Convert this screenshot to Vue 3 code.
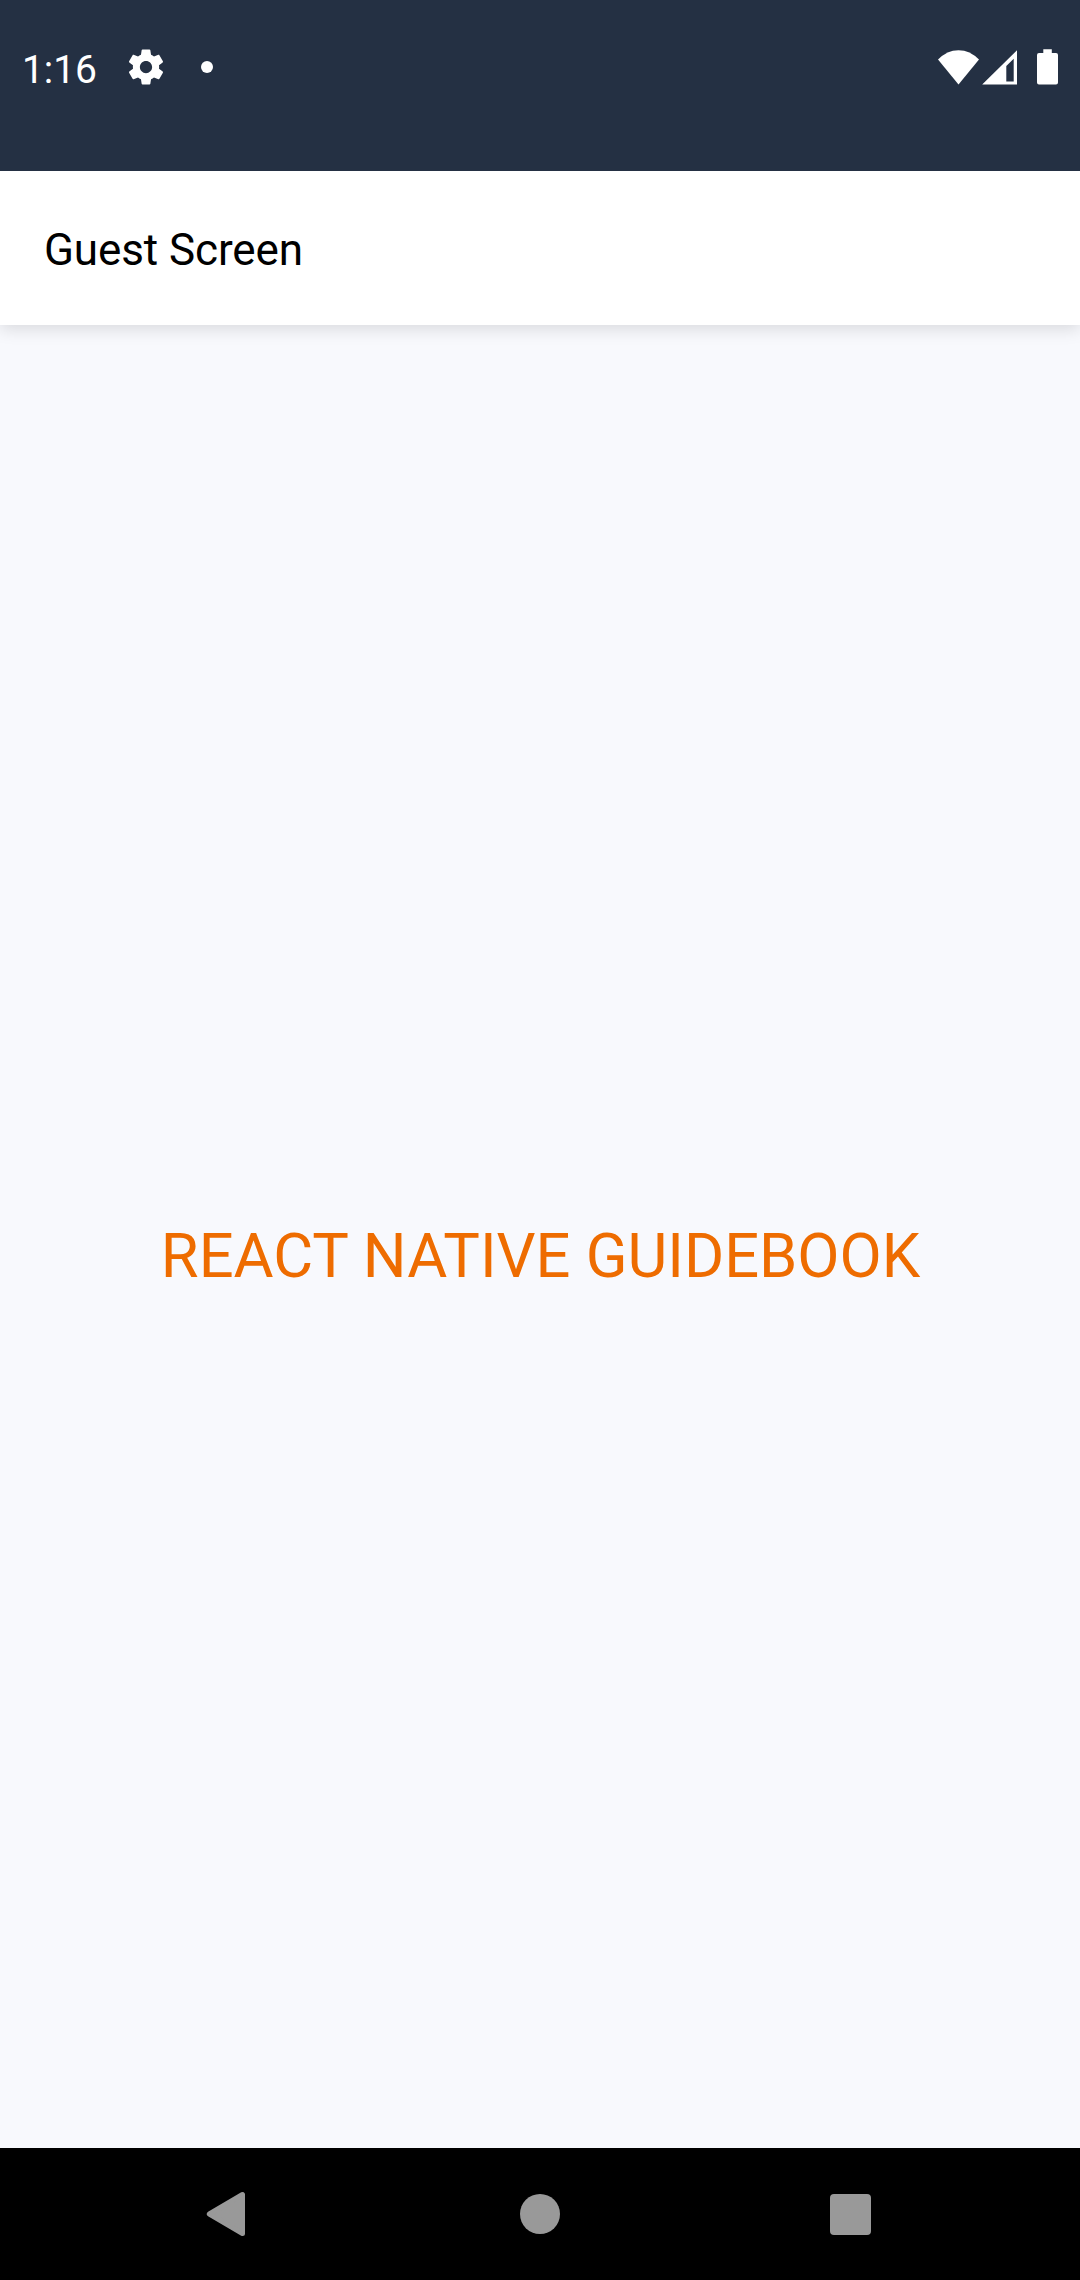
<script setup>
const title = 'Guest Screen'
const message = 'REACT NATIVE GUIDEBOOK'
const time = '1:16'
</script>

<template>
  <div class="screen">
    <div class="status">
      <span class="time">{{ time }}</span>
      <svg class="gear" viewBox="0 0 24 24" width="42" height="42">
        <path d="M19.43 12.98c.04-.32.07-.64.07-.98s-.03-.66-.07-.98l2.11-1.65c.19-.15.24-.42.12-.64l-2-3.46c-.12-.22-.39-.3-.61-.22l-2.49 1c-.52-.4-1.08-.73-1.69-.98l-.38-2.65C14.46 2.18 14.25 2 14 2h-4c-.25 0-.46.18-.49.42l-.38 2.65c-.61.25-1.17.59-1.69.98l-2.49-1c-.23-.09-.49 0-.61.22l-2 3.46c-.13.22-.07.49.12.64l2.11 1.65c-.04.32-.07.65-.07.98s.03.66.07.98l-2.11 1.65c-.19.15-.24.42-.12.64l2 3.46c.12.22.39.3.61.22l2.49-1c.52.4 1.08.73 1.69.98l.38 2.65c.03.24.24.42.49.42h4c.25 0 .46-.18.49-.42l.38-2.65c.61-.25 1.17-.59 1.69-.98l2.49 1c.23.09.49 0 .61-.22l2-3.46c.12-.22.07-.49-.12-.64l-2.11-1.65zM12 15.5c-1.93 0-3.5-1.57-3.5-3.5s1.57-3.5 3.5-3.5 3.5 1.57 3.5 3.5-1.57 3.5-3.5 3.5z" />
      </svg>
      <span class="dot"></span>
      <svg class="system" viewBox="0 0 122 38" width="122" height="38">
        <path d="M0 11.6Q9 2.2 20.5 2.2T41 11.6L20.5 36.4z" />
        <path fill-rule="evenodd" d="M44.2 36.6L79 2.2V36.6zM68.3 18V33.4H75.7V10.8z" />
        <path d="M105.3 1.3h8.5v3.7h4.2a2 2 0 0 1 2 2v27.6a2 2 0 0 1-2 2h-17a2 2 0 0 1-2-2V7a2 2 0 0 1 2-2h4.300z" />
      </svg>
    </div>
    <header class="header">{{ title }}</header>
    <main class="body">
      <p class="message">{{ message }}</p>
    </main>
    <nav class="nav">
      <svg class="back" viewBox="0 0 40 46" width="40" height="46">
        <path d="M3.300 23L36.500 3.500V42.500z" stroke-width="5" stroke-linejoin="round" />
      </svg>
      <span class="home"></span>
      <span class="recent"></span>
    </nav>
  </div>
</template>

<style>
body {
  margin: 0;
}
</style>

<style scoped>
.screen {
  display: flex;
  flex-direction: column;
  width: 1080px;
  height: 2280px;
  font-family: Roboto, sans-serif;
  background: #f8f9fd;
}
.status {
  box-sizing: border-box;
  position: relative;
  z-index: 1;
  flex: none;
  display: flex;
  align-items: center;
  height: 171px;
  padding: 0 20px 37px 22px;
  background: #243043;
  color: #fff;
}
.status svg {
  display: block;
  fill: currentColor;
}
.time {
  width: 103px;
  font-size: 39px;
  letter-spacing: -0.1px;
  line-height: 46px;
  padding-top: 5px;
}
.gear {
  margin-left: 0.3px;
}
.dot {
  width: 12px;
  height: 12px;
  margin-left: 33.7px;
  border-radius: 50%;
  background: #fff;
}
.system {
  margin-left: auto;
}
.header {
  box-sizing: border-box;
  flex: none;
  position: relative;
  height: 154px;
  padding-left: 44px;
  font-size: 44px;
  letter-spacing: -0.1px;
  line-height: 159px;
  color: #000;
  background: #fff;
  box-shadow: 0 4px 16px rgba(0, 0, 0, 0.13);
}
.body {
  flex: 1;
  display: flex;
  align-items: center;
  justify-content: center;
}
.message {
  margin: 0 0 -38px 1px;
  font-size: 61.4px;
  letter-spacing: -0.03px;
  line-height: 72px;
  white-space: nowrap;
  color: #ee6c00;
}
.nav {
  position: relative;
  flex: none;
  display: flex;
  align-items: center;
  height: 132px;
  padding-left: 206px;
  background: #000;
}
.back {
  display: block;
  fill: #999;
  stroke: #999;
}
.home {
  width: 40px;
  height: 40px;
  margin-left: 274px;
  border-radius: 50%;
  background: #999;
}
.recent {
  width: 41px;
  height: 41px;
  margin-left: 270px;
  border-radius: 4px;
  background: #999;
}
</style>
